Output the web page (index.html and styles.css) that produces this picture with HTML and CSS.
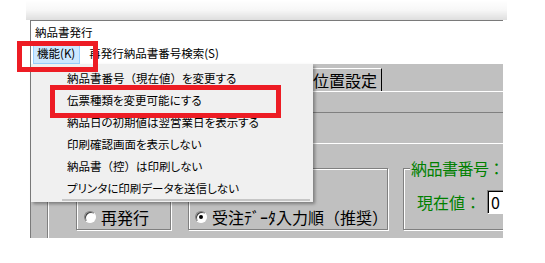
FILE: index.html
```html
<!DOCTYPE html>
<html lang="ja">
<head>
    <meta charset="UTF-8">
    <title>納品書発行</title>
    <link rel="stylesheet" href="styles.css">
</head>
<body>
    <div class="shade"></div>
    <div class="window">
        <div class="titlebar">納品書発行</div>
        <div class="menubar">
            <span class="menu-item active">機能(K)</span>
            <span class="menu-item">再発行納品書番号検索(S)</span>
        </div>
        <div class="client">
            <div class="tabs">
                <div class="tab">印字位置設定</div>
            </div>
            <div class="tab-panel">
                <div class="toolbar-row"></div>
                <div class="frame">
                    <div class="group small">
                        <label class="radio"><span class="dot"></span>再発行</label>
                    </div>
                    <div class="group wide">
                        <label class="radio"><span class="dot checked"></span>受注ﾃﾞｰﾀ入力順（推奨）</label>
                    </div>
                    <div class="group number">
                        <span class="legend">納品書番号：</span>
                        <div class="field">
                            <span>現在値：</span>
                            <div class="input">0</div>
                        </div>
                    </div>
                </div>
            </div>
        </div>
    </div>

    <!-- dropdown of 機能(K) -->
    <div class="dropdown">
        <ul>
            <li>納品書番号<span class="fw">（現在値）</span>を変更する</li>
            <li>伝票種類を変更可能にする</li>
            <li>納品日の初期値は翌営業日を表示する</li>
            <li>印刷確認画面を表示しない</li>
            <li>納品書<span class="fw">（控）</span>は印刷しない</li>
            <li>プリンタに印刷データを送信しない</li>
        </ul>
        <div class="rule"></div>
    </div>

    <div class="mark mark-menu"></div>
    <div class="mark mark-item"></div>
</body>
</html>
```

FILE: styles.css
```css
body {
    margin: 0;
    width: 545px;
    height: 263px;
    overflow: hidden;
    position: relative;
    background: #fff;
    font-family: "Noto Sans CJK JP", sans-serif;
    color: #000;
}
.shade {
    height: 20px;
    margin-left: 26px;
    width: 481px;
    background: linear-gradient(to bottom, rgba(0, 0, 0, 0) 0%, rgba(0, 0, 0, 0.03) 50%, rgba(0, 0, 0, 0.13) 100%);
}
.window {
    margin-left: 30px;
    width: 472px;
    border-top: 1px solid #7a7a7a;
    border-left: 1px solid #7a7a7a;
}
.titlebar {
    height: 22px;
    line-height: 22px;
    padding-left: 4px;
    font-size: 11.5px;
    background: #fff;
}
.menubar {
    height: 21px;
    display: flex;
    align-items: flex-end;
    padding-left: 2px;
    font-size: 11.5px;
    background: #fff;
}
.menu-item {
    height: 18px;
    line-height: 17px;
    padding: 0 4px 0 3px;
    border: 1px solid transparent;
}
.menu-item.active {
    background: #cce8ff;
    border-color: #99d1ff;
}
.menu-item + .menu-item {
    margin-left: 5px;
}
.client {
    background: #c0c0c0;
    height: 174px;
    overflow: hidden;
    padding-top: 4px;
    box-sizing: border-box;
}
.tabs {
    display: flex;
    padding-left: 246px;
    height: 23px;
}
.tab {
    height: 22px;
    line-height: 22px;
    font-size: 16px;
    padding: 0 4px 0 3px;
    border-top: 1px solid #fff;
    border-left: 1px solid #fff;
    border-right: 1px solid #000;
}
.tab-panel {
    border-top: 1px solid #fff;
}
.toolbar-row {
    height: 20px;
    border-bottom: 1px solid #808080;
}
.frame {
    margin: 30px 0 0 16px;
    height: 120px;
    padding-top: 24px;
    display: flex;
    align-items: flex-start;
    border-top: 1px solid #fff;
    border-left: 1px solid #808080;
    box-shadow: inset 1px 0 0 #fff;
}
.group {
    flex: none;
    height: 62px;
    box-sizing: border-box;
    border: 1px solid #808080;
    box-shadow: inset 1px 1px 0 #fff, 1px 1px 0 #fff;
}
.small, .wide {
    display: flex;
    align-items: flex-end;
    padding-bottom: 2px;
}
.small {
    width: 95px;
    margin-left: 28px;
    padding-left: 7px;
}
.wide {
    width: 200px;
    margin-left: 17px;
    padding-left: 6px;
}
.radio {
    display: flex;
    align-items: center;
    gap: 5px;
    font-size: 16px;
    line-height: 20px;
    white-space: nowrap;
}
.dot {
    width: 12px;
    height: 12px;
    box-sizing: border-box;
    border-radius: 50%;
    background: #fff;
    border: 1px solid;
    border-color: #808080 #fff #fff #808080;
    box-shadow: inset 1px 1px 0 #404040;
    display: flex;
    align-items: center;
    justify-content: center;
}
.dot.checked::after {
    content: "";
    width: 4px;
    height: 4px;
    border-radius: 50%;
    background: #000;
}
.number {
    width: 104px;
    margin-left: 15px;
    padding-left: 6px;
    display: flex;
    flex-direction: column;
    align-items: flex-start;
    color: #008000;
    font-size: 16px;
}
.legend {
    margin-top: -10px;
    padding: 0 1px;
    line-height: 18px;
    letter-spacing: -0.5px;
    background: #c0c0c0;
    white-space: nowrap;
}
.field {
    display: flex;
    align-items: center;
    margin: 13px 0 0 7px;
    white-space: nowrap;
}
.input {
    width: 60px;
    height: 24px;
    flex: none;
    box-sizing: border-box;
    margin-left: 6px;
    padding-left: 3px;
    line-height: 22px;
    background: #fff;
    color: #000;
    border: 1px solid;
    border-color: #808080 #fff #fff #808080;
    box-shadow: inset 1px 1px 0 #000;
}
.dropdown {
    position: absolute;
    left: 31px;
    top: 64px;
    width: 282px;
    padding: 3px 0 1px;
    background: #f0f0f0;
    box-shadow: 2px 2px 3px rgba(0, 0, 0, 0.35);
    font-size: 11.5px;
    font-feature-settings: "palt";
}
.dropdown ul {
    margin: 0;
    padding: 0;
    list-style: none;
}
.dropdown li {
    height: 22px;
    line-height: 22px;
    padding-left: 36px;
}
.dropdown .fw {
    font-feature-settings: normal;
}
.rule {
    height: 2px;
    margin: 0 3px 0 31px;
    background: #c6c6c6;
}
.mark {
    position: absolute;
    box-sizing: border-box;
    border: 5px solid #ed1c24;
}
.mark-menu {
    left: 17px;
    top: 41px;
    width: 81px;
    height: 31px;
}
.mark-item {
    left: 50px;
    top: 85px;
    width: 231px;
    height: 33px;
}
```
